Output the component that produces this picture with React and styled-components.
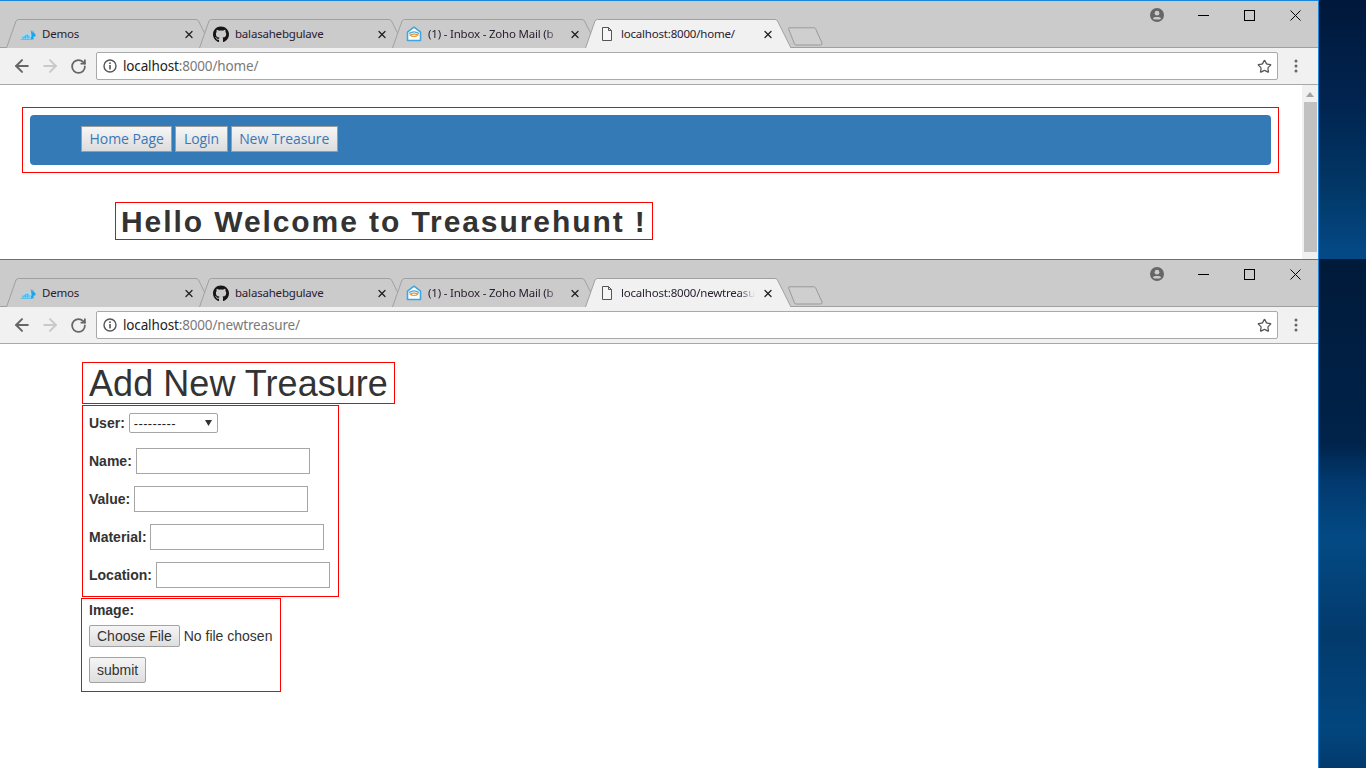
import React from "react";
import styled, { createGlobalStyle } from "styled-components";
import { FaGithub } from "react-icons/fa";
import { ArrowLeft, ArrowRight, RotateCw, Star, X } from "lucide-react";

const Global = createGlobalStyle`
  html, body { margin: 0; padding: 0; background: #00234a; }
  body { width: 1366px; height: 768px; overflow: hidden; font-family: "Liberation Sans", Arial, sans-serif; }
  * { box-sizing: border-box; }
`;

const Desktop = styled.div`
  width: 1366px;
  height: 768px;
  display: flex;
  flex-direction: column;
`;
const WindowRow = styled.div`
  display: flex;
  height: ${(p) => p.$height}px;
`;
const Wallpaper = styled.div`
  flex: 1;
  background: ${(p) => p.$bg};
`;
const Browser = styled.div`
  width: 1319px;
  display: flex;
  flex-direction: column;
  border-top: 1px solid #1a86d8;
  border-right: 1px solid #1a86d8;
  background: #fff;
  overflow: hidden;
`;
const TabStrip = styled.div`
  position: relative;
  height: 47px;
  flex: none;
  background: #cbcbcb;
  display: flex;
  align-items: flex-end;
  padding-left: 6px;
  border-bottom: 1px solid #a0a0a0;
`;
const TabWrap = styled.div`
  position: relative;
  width: 207px;
  height: 29px;
  margin-right: -14px;
  margin-bottom: -1px;
  display: flex;
  align-items: center;
  padding: 1px 16px 0 14px;
  z-index: ${(p) => (p.$active ? 2 : 1)};
`;
const TabShape = styled.svg`
  position: absolute;
  left: 0;
  top: 0;
`;
const TabIcon = styled.span`
  position: relative;
  width: 16px;
  height: 16px;
  flex: none;
  display: flex;
  align-items: center;
  justify-content: center;
  color: #111;
`;
const TabTitle = styled.span`
  position: relative;
  flex: none;
  width: ${(p) => (p.$fade ? 134 : 130)}px;
  margin: -1px ${(p) => (p.$fade ? -4 : 0)}px 0 6px;
  font: 11.5px "Noto Sans", "Open Sans", sans-serif;
  letter-spacing: -0.2px;
  color: #2a2030;
  white-space: nowrap;
  overflow: hidden;
  -webkit-mask-image: ${(p) => (p.$fade ? "linear-gradient(90deg,#000 88%,transparent)" : "none")};
  mask-image: ${(p) => (p.$fade ? "linear-gradient(90deg,#000 88%,transparent)" : "none")};
`;
const TabClose = styled.span`
  position: relative;
  flex: none;
  margin-left: 11px;
  width: 12px;
  height: 12px;
  display: flex;
  align-items: center;
  justify-content: center;
  color: #222;
`;
const NewTab = styled.svg`
  flex: none;
  margin-left: 10px;
  position: relative;
  z-index: 0;
`;
const WindowControls = styled.div`
  position: absolute;
  right: 0;
  top: 0;
  height: 28px;
  display: flex;
  align-items: center;
`;
const Avatar = styled.svg`
  margin-right: 16px;
`;
const WinButton = styled.span`
  width: 46px;
  display: flex;
  justify-content: center;
  align-items: center;
`;
const WinGlyph = styled.svg`
  display: block;
`;
const Toolbar = styled.div`
  height: 37px;
  flex: none;
  background: #f1f1f1;
  border-bottom: 1px solid #a8a8a8;
  display: flex;
  align-items: center;
  padding-left: 12px;
`;
const NavIcon = styled.span`
  width: 20px;
  margin-right: 8px;
  display: flex;
  justify-content: center;
  color: ${(p) => p.$color};
`;
const Omnibox = styled.div`
  width: 1182px;
  height: 28px;
  background: #fff;
  border: 1px solid #a9a9a9;
  border-radius: 2px;
  display: flex;
  align-items: center;
  padding: 0 5px 0 6px;
`;
const InfoIcon = styled.svg`
  flex: none;
`;
const Url = styled.span`
  margin-left: 6px;
  flex: 1;
  font: 13.5px "Noto Sans", "Open Sans", sans-serif;
  letter-spacing: -0.15px;
  color: #7a7a7a;
  b { font-weight: 400; color: #222; }
`;
const Kebab = styled.svg`
  margin-left: 16px;
`;

const TopPage = styled.div`
  flex: 1;
  display: flex;
  min-height: 0;
`;
const TopContent = styled.div`
  flex: 1;
  padding: 22px 23px 0 22px;
`;
const RedNav = styled.nav`
  border: 1px solid #f00;
  padding: 7px;
  height: 66px;
`;
const BlueBar = styled.div`
  height: 50px;
  background: #337ab7;
  border-radius: 4px;
  display: flex;
  align-items: center;
  padding: 0 0 2px 51px;
  gap: 3px;
`;
const NavLink = styled.a`
  height: 26px;
  padding: 0 7.5px 2px;
  display: flex;
  align-items: center;
  background: linear-gradient(#f6f6f6, #dcdcdc);
  border: 1px solid #9c9c9c;
  color: #3a78b8;
  font: 500 14px "Open Sans", "Noto Sans", sans-serif;
  letter-spacing: -0.05px;
`;
const Hello = styled.h2`
  margin: 29px 0 0 93px;
  width: fit-content;
  height: 38px;
  border: 1px solid #f00;
  padding: 0 5px;
  color: #333;
  font: bold 30px/37px "Liberation Sans", Arial, sans-serif;
  letter-spacing: 1.92px;
`;
const Scrollbar = styled.div`
  width: 16px;
  flex: none;
  background: #f1f1f1;
  display: flex;
  flex-direction: column;
  align-items: center;
  padding-top: 7px;
`;
const ScrollArrow = styled.div`
  width: 0;
  height: 0;
  border-left: 4.5px solid transparent;
  border-right: 4.5px solid transparent;
  border-bottom: 5px solid #a3a3a3;
`;
const ScrollThumb = styled.div`
  width: 13px;
  height: 150px;
  margin-top: 5px;
  background: #c1c1c1;
`;

const BottomPage = styled.div`
  flex: 1;
  padding: 18px 0 0 81px;
  display: flex;
  flex-direction: column;
  align-items: flex-start;
`;
const Title = styled.h1`
  margin: 0 0 1px 1px;
  border: 1px solid #f00;
  padding: 0 6px;
  height: 42px;
  color: #333;
  font: 400 36px/41px "Liberation Sans", Arial, sans-serif;
  letter-spacing: 0.05px;
`;
const FieldsBox = styled.div`
  margin: 0 0 1px 1px;
  border: 1px solid #f00;
  padding: 7px 8px 8px 6px;
  display: flex;
  flex-direction: column;
  gap: 12px;
`;
const Field = styled.label`
  display: flex;
  align-items: center;
  gap: ${(p) => p.$gap || 4}px;
  margin-bottom: ${(p) => (p.$gapBelow ? "3px" : "0")};
  color: #333;
  font: bold 14px "Liberation Sans", Arial, sans-serif;
`;
const SelectWrap = styled.span`
  position: relative;
  display: block;
  width: 89px;
  height: 20px;
`;
const Select = styled.select`
  appearance: none;
  width: 100%;
  height: 100%;
  padding: 0 0 0 4px;
  background: #fff;
  border: 1px solid #a6a6a6;
  border-radius: 2px;
  color: #222;
  font: 13px "Liberation Sans", Arial, sans-serif;
  letter-spacing: 0.35px;
`;
const SelectArrow = styled.svg`
  position: absolute;
  right: 6px;
  top: 7px;
`;
const TextInput = styled.input`
  width: 174px;
  height: 26px;
  background: #fff;
  border: 1px solid #a6a6a6;
  padding: 1px 2px;
`;
const ImageBox = styled.div`
  border: 1px solid #f00;
  width: 200px;
  height: 94px;
  padding: 3px 0 0 7px;
  display: flex;
  flex-direction: column;
  align-items: flex-start;
`;
const ImageLabel = styled.div`
  color: #333;
  font: bold 14px/17px "Liberation Sans", Arial, sans-serif;
`;
const FileRow = styled.div`
  display: flex;
  align-items: center;
  gap: 4px;
  margin-top: 6px;
  color: #333;
  font: 14px "Liberation Sans", Arial, sans-serif;
`;
const NativeButton = styled.button`
  height: ${(p) => p.$h}px;
  padding: 0 7px;
  background: linear-gradient(#f5f5f5, #dedede);
  border: 1px solid #a3a3a3;
  border-radius: 2px;
  color: #333;
  font: 14px "Liberation Sans", Arial, sans-serif;
  margin-top: ${(p) => p.$mt || 0}px;
`;

const DemosIcon = () => (
  <svg width="18" height="14" viewBox="0 0 18 14">
    <path d="M1 13 C2 9 6 6 9.5 6 C11 6 12.3 7 13 8.5 L13.5 13 Z" fill="#a5dcf7" />
    <path d="M12 2 L14 5.5 L14.5 2.5 L15.5 5.5 L17.5 7.5 L17.5 9.5 L15 10 L15.5 13 L12 13 L13 9 Z" fill="#18a4ee" />
    <path d="M1 13 H14 M3.5 12.5 C5 8.5 8 7.5 10.5 9.5 M6 13 L6.5 8 M9 13 L8.5 7.5 M2 10.5 L12 10.5" stroke="#2fb0ee" strokeWidth="0.8" fill="none" />
  </svg>
);
const ZohoIcon = () => (
  <svg width="16" height="16" viewBox="0 0 16 16">
    <path d="M1.5 6.2 L8 1.2 L14.5 6.2 V14.5 H1.5 Z" fill="#fff" stroke="#3fa6dc" strokeWidth="1.6" strokeLinejoin="round" />
    <path d="M3 7.5 C6 5.5 10 5.5 13 7.5" fill="none" stroke="#3fa6dc" strokeWidth="1.2" />
    <path d="M4 9 C6 7.8 10 7.8 12 8.8 C10 11 6 11 4 9 Z" fill="none" stroke="#e8963a" strokeWidth="1.2" />
  </svg>
);
const FileIcon = () => (
  <svg width="12" height="14" viewBox="0 0 12 14">
    <path d="M1.5 .5 H7.5 L10.5 3.5 V13.5 H1.5 Z M7.5 .5 V3.5 H10.5" fill="#f6f6f6" stroke="#555" strokeWidth="1" />
  </svg>
);

const Tab = ({ icon, title, active, fade }) => (
  <TabWrap $active={active}>
    <TabShape width="207" height="29" viewBox="0 0 207 29">
      <path
        d="M0.5 29 L10 2 Q10.8 0.5 12.5 0.5 L190 0.5 Q191.6 0.5 192.5 2 L206 29"
        fill={active ? "#f1f1f1" : "#cbcbcb"}
        stroke="#a0a0a0"
        strokeWidth="1"
      />
    </TabShape>
    <TabIcon>{icon}</TabIcon>
    <TabTitle $fade={fade}>{title}</TabTitle>
    <TabClose><X size={13} strokeWidth={2.6} /></TabClose>
  </TabWrap>
);

const Chrome = ({ url, tabTitle }) => (
  <>
    <TabStrip>
      <Tab icon={<DemosIcon />} title="Demos" />
      <Tab icon={<FaGithub size={17} color="#161414" />} title="balasahebgulave" />
      <Tab icon={<ZohoIcon />} title="(1) - Inbox - Zoho Mail (b" fade />
      <Tab icon={<FileIcon />} title={tabTitle} active fade={tabTitle.length > 22} />
      <NewTab width="35" height="20" viewBox="0 0 35 20">
        <path d="M1 .8 H26 Q27 .8 27.5 1.6 L34 16 Q34.5 18 32.5 18 H8 Q7 18 6.5 17 L.6 2 Q.4 .8 1 .8 Z" fill="#cfcfcf" stroke="#9a9a9a" />
      </NewTab>
      <WindowControls>
        <Avatar width="14" height="14" viewBox="0 0 14 14">
          <circle cx="7" cy="7" r="7" fill="#666" />
          <circle cx="7" cy="5.2" r="2.4" fill="#cbcbcb" />
          <path d="M2.8 10.4 C4 8.6 10 8.6 11.2 10.4 C10 12 4 12 2.8 10.4 Z" fill="#cbcbcb" />
        </Avatar>
        <WinButton>
          <WinGlyph width="11" height="11" viewBox="0 0 11 11"><path d="M0 5.5 H11" stroke="#000" strokeWidth="1" /></WinGlyph>
        </WinButton>
        <WinButton>
          <WinGlyph width="11" height="11" viewBox="0 0 11 11"><rect x=".5" y=".5" width="10" height="10" fill="none" stroke="#000" strokeWidth="1" /></WinGlyph>
        </WinButton>
        <WinButton>
          <WinGlyph width="11" height="11" viewBox="0 0 11 11"><path d="M.5 .5 L10.5 10.5 M10.5 .5 L.5 10.5" stroke="#000" strokeWidth="1" /></WinGlyph>
        </WinButton>
      </WindowControls>
    </TabStrip>
    <Toolbar>
      <NavIcon $color="#666"><ArrowLeft size={20} strokeWidth={2.4} /></NavIcon>
      <NavIcon $color="#c9c9c9"><ArrowRight size={20} strokeWidth={2.4} /></NavIcon>
      <NavIcon $color="#666"><RotateCw size={17} strokeWidth={2.5} /></NavIcon>
      <Omnibox>
        <InfoIcon width="14" height="14" viewBox="0 0 14 14">
          <circle cx="7" cy="7" r="6" fill="none" stroke="#555" strokeWidth="1.4" />
          <rect x="6.2" y="6" width="1.6" height="4.4" fill="#555" />
          <rect x="6.2" y="3.4" width="1.6" height="1.6" fill="#555" />
        </InfoIcon>
        <Url><b>localhost</b>{url}</Url>
        <Star size={15} strokeWidth={2} color="#555" />
      </Omnibox>
      <Kebab width="4" height="14" viewBox="0 0 4 14">
        <circle cx="2" cy="2" r="1.5" fill="#666" />
        <circle cx="2" cy="7" r="1.5" fill="#666" />
        <circle cx="2" cy="12" r="1.5" fill="#666" />
      </Kebab>
    </Toolbar>
  </>
);

export default function App() {
  return (
    <Desktop>
      <Global />
      <WindowRow $height={259}>
        <Browser>
          <Chrome url=":8000/home/" tabTitle="localhost:8000/home/" />
          <TopPage>
            <TopContent>
              <RedNav>
                <BlueBar>
                  <NavLink>Home Page</NavLink>
                  <NavLink>Login</NavLink>
                  <NavLink>New Treasure</NavLink>
                </BlueBar>
              </RedNav>
              <Hello>Hello Welcome to Treasurehunt !</Hello>
            </TopContent>
            <Scrollbar>
              <ScrollArrow />
              <ScrollThumb />
            </Scrollbar>
          </TopPage>
        </Browser>
        <Wallpaper $bg="linear-gradient(#00183a 0%, #012450 40%, #023664 70%, #044a88 100%)" />
      </WindowRow>
      <WindowRow $height={509}>
        <Browser>
          <Chrome url=":8000/newtreasure/" tabTitle="localhost:8000/newtreasure/" />
          <BottomPage>
            <Title>Add New Treasure</Title>
            <FieldsBox>
              <Field $gapBelow>
                User:
                <SelectWrap>
                  <Select defaultValue="">
                    <option value="">---------</option>
                  </Select>
                  <SelectArrow width="7" height="6" viewBox="0 0 7 6"><path d="M0 0 H7 L3.5 6 Z" fill="#333" /></SelectArrow>
                </SelectWrap>
              </Field>
              <Field>Name: <TextInput /></Field>
              <Field>Value: <TextInput /></Field>
              <Field $gap={3}>Material: <TextInput /></Field>
              <Field>Location: <TextInput /></Field>
            </FieldsBox>
            <ImageBox>
              <ImageLabel>Image:</ImageLabel>
              <FileRow>
                <NativeButton type="button" $h={22}>Choose File</NativeButton>
                No file chosen
              </FileRow>
              <NativeButton type="button" $h={26} $mt={10}>submit</NativeButton>
            </ImageBox>
          </BottomPage>
        </Browser>
        <Wallpaper $bg="linear-gradient(#001a3a 0%, #00234a 36%, #023a70 44%, #034a84 55%, #033a6c 74%, #02467f 92%, #033a6c 100%)" />
      </WindowRow>
    </Desktop>
  );
}
